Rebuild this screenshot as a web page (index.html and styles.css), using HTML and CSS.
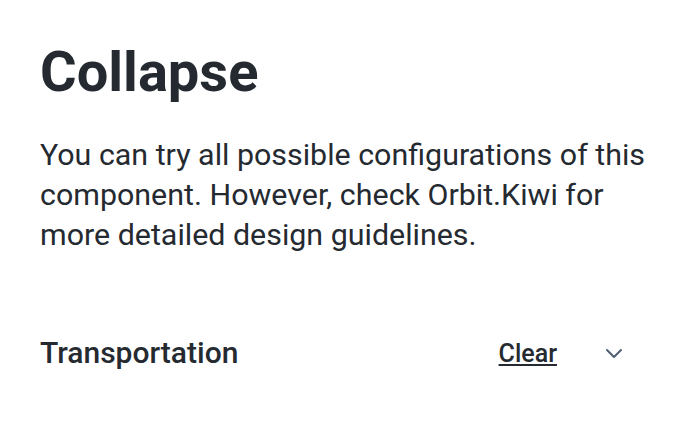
FILE: index.html
```html
<!DOCTYPE html>
<html>
<head>
<meta charset="utf-8">
<link rel="stylesheet" href="styles.css">
</head>
<body>
<main class="page">
  <h1 class="title">Collapse</h1>
  <p class="lead">You can try all possible configurations of this component. However, check Orbit.Kiwi for more detailed design guidelines.</p>
  <div class="collapse">
    <h3 class="collapse-title">Transportation</h3>
    <div class="actions">
      <a class="clear">Clear</a>
      <svg class="chevron" width="24" height="24" viewBox="0 0 24 24"><path d="M5 9l7 7 7-7" fill="none" stroke="#4f5e71" stroke-width="2" stroke-linecap="round" stroke-linejoin="round"/></svg>
    </div>
  </div>
</main>
</body>
</html>
```
FILE: styles.css
```css
html, body { margin: 0; padding: 0; background: #fff; }
body { font-family: Roboto, "Noto Sans", sans-serif; color: #252a31; }
.page { padding: 40px 40px 0 40px; }
.title { margin: 0; font-size: 56px; font-weight: 700; line-height: 64px; }
.lead { margin: 31px 0 0 0; font-size: 30.4px; line-height: 40px; }
.collapse { margin-top: 78px; display: flex; align-items: center; justify-content: space-between; padding-right: 20px; }
.collapse-title { margin: 0; font-size: 30px; font-weight: 500; line-height: 40px; }
.actions { display: flex; align-items: center; gap: 45px; }
.clear { font-size: 25px; font-weight: 500; text-decoration: underline; color: #252a31; }
.chevron { display: block; }
```
